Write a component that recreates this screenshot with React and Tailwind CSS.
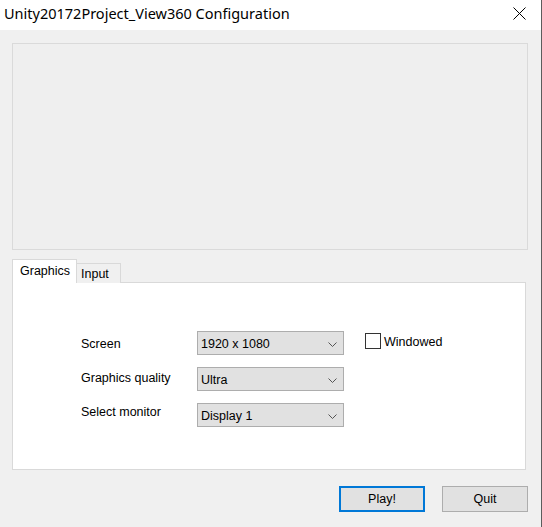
import { useState } from 'react'

function Chevron() {
  return (
    <svg width="9" height="5" viewBox="0 0 9 5" className="shrink-0">
      <path d="M0.5 0.5 L4.5 4.5 L8.5 0.5" fill="none" stroke="#555" strokeWidth="1" />
    </svg>
  )
}

function Select({ value }) {
  return (
    <div className="w-[147px] h-[24px] bg-[#e1e1e1] border border-[#adadad] flex items-start justify-between pl-[3px] pr-[6px] pt-[5px]">
      <span className="leading-[15px]">{value}</span>
      <span className="pt-[5px]"><Chevron /></span>
    </div>
  )
}

export default function App() {
  const [windowed, setWindowed] = useState(false)
  const font = { fontFamily: '"Liberation Sans", Arial, sans-serif' }

  return (
    <div className="w-[542px] h-[527px] bg-[#f0f0f0] border-r border-[#5c5c5c] flex flex-col text-black text-[12.5px]" style={font}>
      {/* Title bar */}
      <div className="h-[30px] bg-white flex items-start justify-between pl-[4px] pr-[15px] shrink-0">
        <span className="text-[14.5px] leading-[20px] pt-[3px]" style={{ fontFamily: '"Noto Sans", sans-serif' }}>
          Unity20172Project_View360 Configuration
        </span>
        <svg width="13" height="13" viewBox="0 0 13 13" className="mt-[7px]">
          <path d="M0.5 0.5 L12.5 12.5 M12.5 0.5 L0.5 12.5" stroke="#000" strokeWidth="1" fill="none" />
        </svg>
      </div>

      <div className="pl-[12px] flex flex-col">
        {/* Banner area */}
        <div className="mt-[13px] w-[516px] h-[207px] border border-[#dadada] bg-[#efefef]" />

        {/* Tabs */}
        <div className="mt-[9px] flex items-end relative z-10 -mb-px">
          <div className="w-[65px] h-[24px] bg-white border border-b-0 border-[#d9d9d9] pl-[7px] pt-[4px] leading-[15px]">
            Graphics
          </div>
          <div className="w-[44px] h-[20px] bg-[#f0f0f0] border border-l-0 border-b-0 border-[#d9d9d9] pl-[4px] pt-[3px] leading-[15px]">
            Input
          </div>
        </div>

        {/* Tab content */}
        <div className="w-[514px] h-[188px] bg-white border border-[#d9d9d9] flex pl-[68px]">
          <div className="w-[116px] flex flex-col gap-[19px] pt-[54px]">
            <span className="leading-[15px]">Screen</span>
            <span className="leading-[15px]">Graphics quality</span>
            <span className="leading-[15px]">Select monitor</span>
          </div>
          <div className="flex flex-col gap-[12px] pt-[48px]">
            <Select value="1920 x 1080" />
            <Select value="Ultra" />
            <Select value="Display 1" />
          </div>
          <label className="ml-[21px] pt-[50px] flex items-start gap-[3px] h-fit cursor-default">
            <span
              onClick={() => setWindowed(!windowed)}
              className="w-[16px] h-[16px] border border-[#333] bg-white flex items-center justify-center"
            >
              {windowed && (
                <svg width="11" height="9" viewBox="0 0 11 9">
                  <path d="M1 4.5 L4 7.5 L10 1" stroke="#333" strokeWidth="1.5" fill="none" />
                </svg>
              )}
            </span>
            <span className="leading-[15px] pt-[2px]">Windowed</span>
          </label>
        </div>

        {/* Buttons */}
        <div className="mt-[16px] flex justify-end gap-[17px] pr-[13px]">
          <button className="w-[86px] h-[26px] bg-[#e1e1e1] border-2 border-[#0078d7] leading-[15px]">Play!</button>
          <button className="w-[86px] h-[26px] bg-[#e1e1e1] border border-[#adadad] leading-[15px]">Quit</button>
        </div>
      </div>
    </div>
  )
}
